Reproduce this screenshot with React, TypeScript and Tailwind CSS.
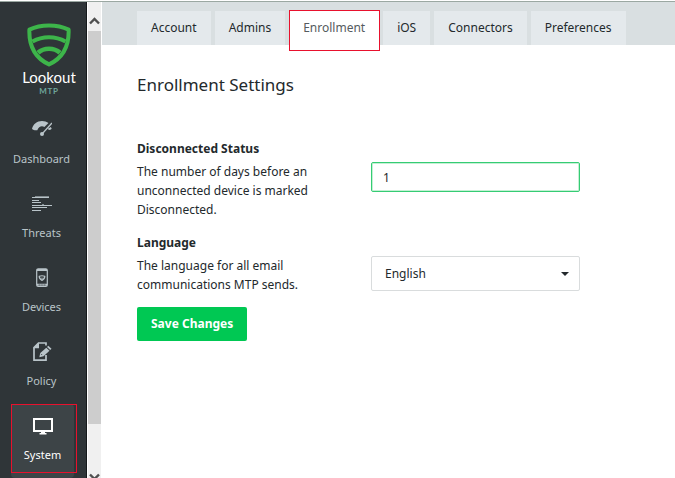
import type { ReactNode } from "react";
import { useState } from "react";

function Shield() {
  return (
    <svg viewBox="0 0 44 44" className="h-11 w-11" fill="none" stroke="#3db54a" strokeWidth="4" aria-hidden="true">
      <path d="M2.400 6.600C8.500 3.600 15 2.400 22 2.400s13.500 1.200 19.600 4.200c.6 15.500-5 28-19.600 34.800C7.400 34.600 1.800 22.100 2.400 6.600Z" strokeLinejoin="round" />
      <path d="M5.500 18.600c10-5.800 23-5.800 33 0" />
      <path d="M11 29.800c6-5.400 16-5.400 22 0" strokeWidth="4.600" />
    </svg>
  );
}

function GaugeIcon() {
  return (
    <svg viewBox="0 0 20 20" className="size-5" aria-hidden="true">
      <path d="M0 9C1 4.200 5 1 10 1c2.500 0 4.700.7 6.500 2.100L12.400 7C9.800 5.500 6.600 6.500 5.300 10.200 3.400 10.600 1.500 10.300 0 9Z" fill="#b9c4c9" />
      <path d="M10 14 20 3" stroke="#b9c4c9" strokeWidth="1.300" />
      <circle cx="10" cy="14" r="2" fill="#b9c4c9" />
      <path d="m15.800 8.800 3-1.800.9 1.700c-.7.800-1.700 1.300-2.800 1.400Z" fill="#b9c4c9" />
    </svg>
  );
}

function ThreatsIcon() {
  return (
    <svg viewBox="0 0 20 20" className="size-5" stroke="#b9c4c9" aria-hidden="true">
      <path d="M0 3.500h17M0 6.500h7M0 8.500h9M0 11.500h20M0 13.500h15M0 16.500h9" strokeWidth="1" />
      <path d="M3 2.500h14M10 10.500h2" strokeWidth="1" opacity=".6" />
    </svg>
  );
}

function DeviceIcon() {
  return (
    <svg viewBox="0 0 20 20" className="size-5" fill="none" aria-hidden="true">
      <rect x="4.700" y=".8" width="10.600" height="17.600" rx="1.500" stroke="#b9c4c9" strokeWidth="1.200" />
      <path d="M5 2h10M5 16.700h10" stroke="#b9c4c9" strokeWidth="2" />
      <path d="M6.500 17h2M9.200 17h1.600M11.500 17h2" stroke="#2f3538" strokeWidth=".7" />
      <path d="M7.200 8.300c1.800-.7 3.800-.7 5.600 0 0 1.800-.9 3.200-2.800 4.100-1.900-.9-2.800-2.300-2.800-4.100Z" stroke="#b9c4c9" strokeWidth="1.200" />
      <path d="M8.500 10.200h3" stroke="#b9c4c9" strokeWidth=".7" />
    </svg>
  );
}

function PolicyIcon() {
  return (
    <svg viewBox="0 0 20 20" className="size-5" fill="none" aria-hidden="true">
      <path d="M14 3.500V1H6.500L2 5.500v12.700h12V13" stroke="#b9c4c9" strokeWidth="1.700" />
      <path d="M1.200 6.300 7 .5v5.800Z" fill="#b9c4c9" />
      <path d="m7.300 15.300 1-4.300 6-5.300 3.200 3-6 5.500Z" fill="#b9c4c9" />
      <path d="m15 5 1.300-1.200 3.200 2.900L18.200 8Z" fill="#b9c4c9" />
      <path d="m9.200 12 .9 1" stroke="#2f3538" strokeWidth=".8" />
    </svg>
  );
}

function MonitorIcon() {
  return (
    <svg viewBox="0 0 20 20" className="size-5" fill="none" aria-hidden="true">
      <rect x="1" y="3" width="18" height="12" stroke="#fff" strokeWidth="2" />
      <path d="M8 15h4v2h1.500v1.500h-7V17H8Z" fill="#fff" />
    </svg>
  );
}

const navItems: { label: string; icon: ReactNode }[] = [
  { label: "Dashboard", icon: <GaugeIcon /> },
  { label: "Threats", icon: <ThreatsIcon /> },
  { label: "Devices", icon: <DeviceIcon /> },
  { label: "Policy", icon: <PolicyIcon /> },
];

const tabs = ["Account", "Admins", "Enrollment", "iOS", "Connectors", "Preferences"];

function Sidebar() {
  return (
    <aside className="flex w-[87px] shrink-0 flex-col overflow-hidden border-r border-[#15191b] bg-[#2f3538]">
      <div className="flex flex-col items-center pt-[21px] pb-3 pl-3">
        <Shield />
        <span className="mt-px font-['Lato',sans-serif] text-[15px] leading-[18px] text-white">Lookout</span>
        <span className="font-['Lato',sans-serif] text-[8px] leading-[10px] font-bold tracking-widest text-[#6fa79c]">MTP</span>
      </div>
      <nav className="flex flex-col gap-1 pr-[3px]">
        {navItems.map((item) => (
          <a key={item.label} href="#" className="flex h-[70px] flex-col items-center gap-[9px] pt-3 text-[11px] leading-5 text-[#b9c4c9]">
            {item.icon}
            {item.label}
          </a>
        ))}
        <a
          href="#"
          aria-current="page"
          className="relative mr-[9px] ml-[11px] flex h-[74px] flex-col items-center gap-[9px] rounded-sm bg-[#3d4447] pt-3 text-[11px] leading-5 text-white"
        >
          <MonitorIcon />
          System
          <span className="absolute top-0 -right-[3px] left-0 h-[69px] border border-[#e8112d]" />
        </a>
      </nav>
    </aside>
  );
}

function ScrollBar() {
  return (
    <div className="flex w-[15px] shrink-0 flex-col overflow-hidden border-x border-white bg-[#f0f0f0]" aria-hidden="true">
      <svg viewBox="0 0 13 29" className="h-[29px] w-full shrink-0" fill="none">
        <path d="m2 21.500 4.500-4.500 4.500 4.500" stroke="#505050" strokeWidth="2.400" />
      </svg>
      <div className="grow bg-[#cdcdcd]" />
      <div className="h-[54px] shrink-0 overflow-hidden pt-[49px]">
        <svg viewBox="0 0 13 10" className="w-full" fill="none">
          <path d="M2 1.500 6.500 6 11 1.500" stroke="#505050" strokeWidth="2.400" />
        </svg>
      </div>
    </div>
  );
}

export default function App() {
  const [days, setDays] = useState("1");

  return (
    <div className="flex h-screen flex-col overflow-hidden bg-white font-['Noto_Sans',sans-serif] text-xs text-[#23292c]">
      <div className="mt-px h-px shrink-0 bg-[#9ba8a2]" />
      <div className="flex min-h-0 grow">
        <Sidebar />
        <ScrollBar />
        <main className="min-w-0 grow">
          <div role="tablist" className="flex h-[43px] items-end gap-1 bg-[#d9dfe1] pl-[35px]">
            {tabs.map((tab) =>
              tab === "Enrollment" ? (
                <button key={tab} role="tab" aria-selected="true" className="relative h-[34px] bg-white px-3.5 text-[#555b5e]">
                  {tab}
                  <span className="absolute -top-px -right-px left-0 h-[41px] border border-[#e8112d]" />
                </button>
              ) : (
                <button key={tab} role="tab" aria-selected="false" className="h-[34px] bg-[#e4e9ec] px-3.5">
                  {tab}
                </button>
              ),
            )}
          </div>
          <form className="px-[35px] pt-7" onSubmit={(e) => e.preventDefault()}>
            <h1 className="text-[17px] leading-6">Enrollment Settings</h1>
            <div className="mt-[42px]">
              <label htmlFor="days" className="block leading-5 font-bold">Disconnected Status</label>
              <div className="mt-[3px] flex items-start gap-[34px]">
                <p className="w-[200px] leading-[19px]">The number of days before an unconnected device is marked Disconnected.</p>
                <input
                  id="days"
                  value={days}
                  onChange={(e) => setDays(e.target.value)}
                  className="h-[30px] w-[209px] rounded-xs border border-[#35cc74] bg-white px-[11px] shadow-[inset_0_0_0_1px_#c4f0d4] outline-none"
                />
              </div>
            </div>
            <div className="mt-3.5">
              <label htmlFor="language" className="block leading-5 font-bold">Language</label>
              <div className="mt-[3px] flex items-start gap-[34px]">
                <p className="w-[200px] leading-[19px]">The language for all email communications MTP sends.</p>
                <div className="relative">
                  <select id="language" className="block h-[35px] w-[209px] appearance-none rounded-xs border border-[#d9dcdd] bg-white px-[13px]">
                    <option>English</option>
                  </select>
                  <svg viewBox="0 0 8 4" className="pointer-events-none absolute top-4 right-[11px] h-1 w-2" aria-hidden="true">
                    <path d="M0 0h8L4 4Z" fill="#23292c" />
                  </svg>
                </div>
              </div>
            </div>
            <button type="submit" className="mt-[13px] h-[34px] rounded-xs bg-[#00c853] px-3.5 font-bold text-white">Save Changes</button>
          </form>
        </main>
      </div>
    </div>
  );
}
